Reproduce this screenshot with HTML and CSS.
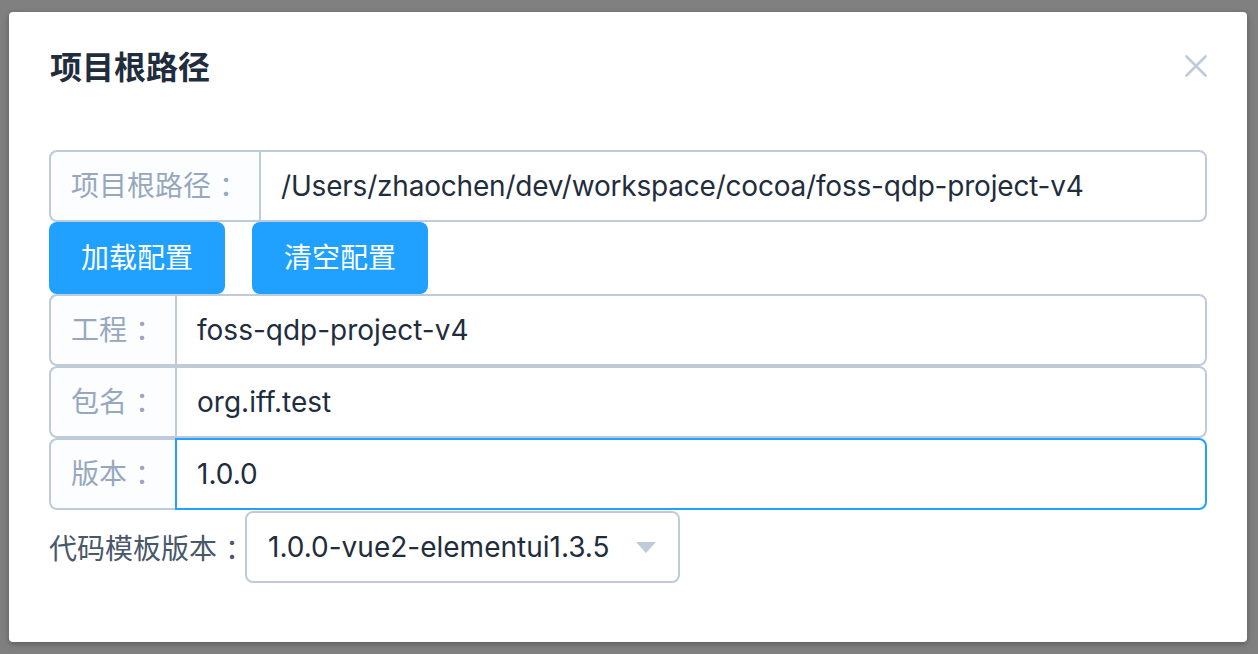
FILE: index.html
```html
<!DOCTYPE html>
<html lang="zh">
<head>
<meta charset="utf-8">
<title>项目根路径</title>
<link rel="stylesheet" href="styles.css">
</head>
<body>
<div class="dialog">
  <div class="dialog-header">
    <span class="dialog-title">项目根路径</span>
    <svg class="close" width="22" height="22" viewBox="0 0 22 22"><path d="M1.5 1.5 L20.5 20.5 M20.5 1.5 L1.5 20.5" stroke="#bfcbd9" stroke-width="2.6" stroke-linecap="round" fill="none"/></svg>
  </div>
  <div class="dialog-body">
    <div class="group">
      <div class="prepend">项目根路径<span class="colon">：</span></div>
      <div class="field field-path">/Users/zhaochen/dev/workspace/cocoa/foss-qdp-project-v4</div>
    </div>
    <div class="buttons">
      <button class="btn">加载配置</button>
      <button class="btn btn-second">清空配置</button>
    </div>
    <div class="group">
      <div class="prepend">工程<span class="colon">：</span></div>
      <div class="field">foss-qdp-project-v4</div>
    </div>
    <div class="group">
      <div class="prepend">包名<span class="colon">：</span></div>
      <div class="field">org.iff.test</div>
    </div>
    <div class="group">
      <div class="prepend">版本<span class="colon">：</span></div>
      <div class="field focused">1.0.0</div>
    </div>
    <div class="select-row">
      <span class="select-label">代码模板版本<span class="colon">：</span></span>
      <div class="select">
        <span class="select-value">1.0.0-vue2-elementui1.3.5</span>
        <svg class="caret" width="20" height="11" viewBox="0 0 20 11"><path d="M0 0 L20 0 L10 11 Z" fill="#bfcbd9"/></svg>
      </div>
    </div>
  </div>
</div>
</body>
</html>
```

FILE: styles.css
```css
html, body {
  margin: 0;
  padding: 0;
}
body {
  background: #808080;
  width: 1258px;
  height: 654px;
  box-sizing: border-box;
  padding: 12px 11px 12px 9px;
  font-family: Inter, "Noto Sans CJK SC", sans-serif;
  overflow: hidden;
}
.dialog {
  width: 1238px;
  height: 630px;
  background: #fff;
  border-radius: 4px;
  box-shadow: 0 2px 6px rgba(0,0,0,0.3);
  box-sizing: border-box;
  padding: 40px 40px 0 40px;
}
.dialog-header {
  display: flex;
  justify-content: space-between;
  align-items: flex-start;
  height: 32px;
}
.dialog-title {
  font-size: 32px;
  line-height: 32px;
  font-weight: bold;
  color: #1f2d3d;
  margin-left: 1px;
}
.close {
  display: block;
  margin-top: 3px;
}
.dialog-body {
  padding-top: 66px;
}
.colon {
  padding-left: 8px;
  margin-right: -8px;
}
.group {
  display: flex;
  height: 72px;
  font-size: 28px;
}
.prepend {
  box-sizing: border-box;
  height: 72px;
  line-height: 68px;
  padding: 0 20px;
  border: 2px solid #bfcbd9;
  border-right: 0;
  border-radius: 8px 0 0 8px;
  background: #fbfdff;
  color: #97a8be;
  white-space: nowrap;
}
.field {
  flex: 1;
  box-sizing: border-box;
  height: 72px;
  line-height: 68px;
  padding: 0 20px;
  border: 2px solid #bfcbd9;
  border-radius: 0 8px 8px 0;
  color: #1f2d3d;
  white-space: nowrap;
}
.field-path {
  letter-spacing: -0.2px;
}
.field.focused {
  border-color: #20a0ff;
}
.buttons {
  display: flex;
  gap: 27px;
  height: 72px;
}
.btn {
  box-sizing: border-box;
  height: 72px;
  width: 176px;
  padding: 0;
  border: 2px solid #20a0ff;
  background: #20a0ff;
  color: #fff;
  border-radius: 8px;
  font-family: Inter, "Noto Sans CJK SC", sans-serif;
  font-size: 28px;
  line-height: 68px;
}
.select-row {
  display: flex;
  align-items: center;
  margin-top: 1px;
  font-size: 28px;
}
.select-label {
  color: #48576a;
  width: 196px;
  white-space: nowrap;
}
.select {
  box-sizing: border-box;
  width: 435px;
  height: 72px;
  border: 2px solid #bfcbd9;
  border-radius: 8px;
  display: flex;
  align-items: center;
  justify-content: space-between;
  padding: 0 22px 0 21px;
  color: #1f2d3d;
}
.caret {
  display: block;
}
```
